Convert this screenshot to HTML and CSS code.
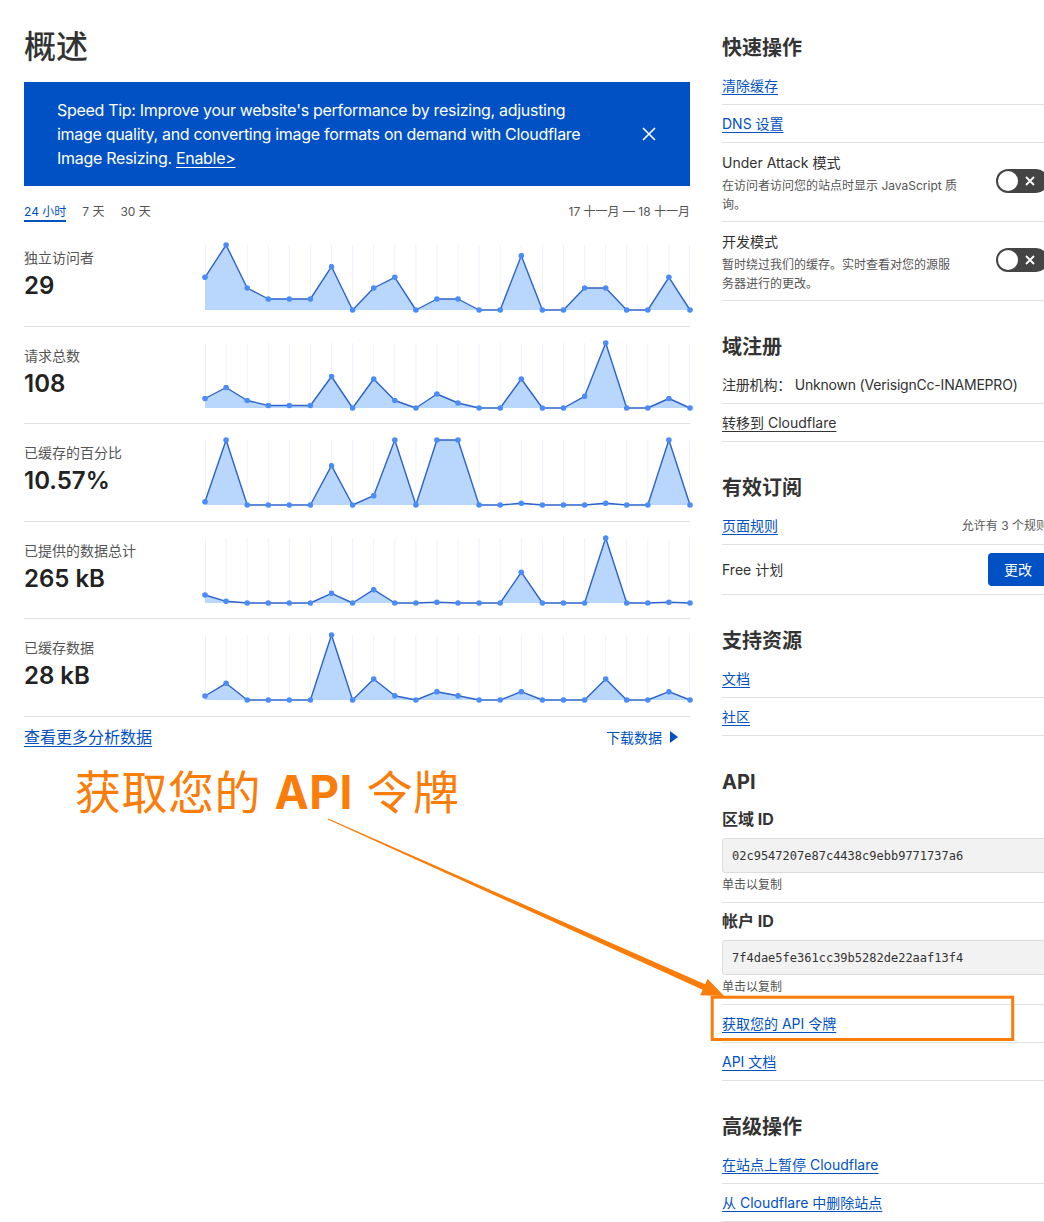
FILE: index.html
```html
<!DOCTYPE html>
<html lang="zh-CN">
<head>
<meta charset="utf-8">
<title>概述</title>
<link rel="stylesheet" href="styles.css">
</head>
<body>
<svg class="defs" width="0" height="0" aria-hidden="true">
  <defs>
    <marker id="dot" viewBox="0 0 6 6" refX="3" refY="3" markerWidth="6" markerHeight="6" markerUnits="userSpaceOnUse">
      <circle cx="3" cy="3" r="2.8" fill="#4a8df8"/>
    </marker>
  </defs>
</svg>
<div class="page">
  <main class="main">
    <h1 class="title">概述</h1>
    <div class="banner">
      <p class="banner-text">Speed Tip: Improve your website's performance by resizing, adjusting image quality, and converting image formats on demand with Cloudflare Image Resizing. <a class="banner-link" href="#">Enable&gt;</a></p>
      <svg class="close" viewBox="0 0 14 14" width="14" height="14"><path d="M1 1L13 13M13 1L1 13" stroke="#fff" stroke-width="1.6" fill="none"/></svg>
    </div>
    <div class="range">
      <div class="tabs"><span class="tab active">24 小时</span><span class="tab">7 天</span><span class="tab">30 天</span></div>
      <div class="dates">17 十一月 — 18 十一月</div>
    </div>
    <div class="metrics">
      <div class="metric">
        <div class="metric-info"><div class="metric-label">独立访问者</div><div class="metric-value">29</div></div>
        <svg class="chart" viewBox="0 0 485 65" width="485" height="65">
          <path class="grid" d="M0.5 0V65M21.1 0V65M42.2 0V65M63.3 0V65M84.3 0V65M105.4 0V65M126.5 0V65M147.6 0V65M168.7 0V65M189.8 0V65M210.9 0V65M231.9 0V65M253 0V65M274.1 0V65M295.2 0V65M316.3 0V65M337.4 0V65M358.5 0V65M379.6 0V65M400.7 0V65M421.7 0V65M442.8 0V65M463.9 0V65M484.5 0V65"/>
          <polygon class="area" points="0,32.3 21.1,0 42.2,43 63.3,54 84.3,54 105.4,54 126.5,21.7 147.6,65 168.7,43 189.8,32.3 210.9,65 231.9,54 253,54 274.1,65 295.2,65 316.3,10.7 337.4,65 358.5,65 379.6,43 400.7,43 421.7,65 442.8,65 463.9,32.3 485,65 0,65"/>
          <polyline class="line" points="0,32.3 21.1,0 42.2,43 63.3,54 84.3,54 105.4,54 126.5,21.7 147.6,65 168.7,43 189.8,32.3 210.9,65 231.9,54 253,54 274.1,65 295.2,65 316.3,10.7 337.4,65 358.5,65 379.6,43 400.7,43 421.7,65 442.8,65 463.9,32.3 485,65"/>
        </svg>
      </div>
      <div class="metric">
        <div class="metric-info"><div class="metric-label">请求总数</div><div class="metric-value">108</div></div>
        <svg class="chart" viewBox="0 0 485 65" width="485" height="65">
          <path class="grid" d="M0.5 0V65M21.1 0V65M42.2 0V65M63.3 0V65M84.3 0V65M105.4 0V65M126.5 0V65M147.6 0V65M168.7 0V65M189.8 0V65M210.9 0V65M231.9 0V65M253 0V65M274.1 0V65M295.2 0V65M316.3 0V65M337.4 0V65M358.5 0V65M379.6 0V65M400.7 0V65M421.7 0V65M442.8 0V65M463.9 0V65M484.5 0V65"/>
          <polygon class="area" points="0,55.5 21.1,44.5 42.2,57.5 63.3,62.5 84.3,62.5 105.4,62.5 126.5,33.5 147.6,65 168.7,36 189.8,57.5 210.9,65 231.9,51 253,60 274.1,65 295.2,65 316.3,36 337.4,65 358.5,65 379.6,53.3 400.7,0 421.7,65 442.8,65 463.9,55.5 485,65 0,65"/>
          <polyline class="line" points="0,55.5 21.1,44.5 42.2,57.5 63.3,62.5 84.3,62.5 105.4,62.5 126.5,33.5 147.6,65 168.7,36 189.8,57.5 210.9,65 231.9,51 253,60 274.1,65 295.2,65 316.3,36 337.4,65 358.5,65 379.6,53.3 400.7,0 421.7,65 442.8,65 463.9,55.5 485,65"/>
        </svg>
      </div>
      <div class="metric">
        <div class="metric-info"><div class="metric-label">已缓存的百分比</div><div class="metric-value">10.57%</div></div>
        <svg class="chart" viewBox="0 0 485 65" width="485" height="65">
          <path class="grid" d="M0.5 0V65M21.1 0V65M42.2 0V65M63.3 0V65M84.3 0V65M105.4 0V65M126.5 0V65M147.6 0V65M168.7 0V65M189.8 0V65M210.9 0V65M231.9 0V65M253 0V65M274.1 0V65M295.2 0V65M316.3 0V65M337.4 0V65M358.5 0V65M379.6 0V65M400.7 0V65M421.7 0V65M442.8 0V65M463.9 0V65M484.5 0V65"/>
          <polygon class="area" points="0,61.7 21.1,0 42.2,65 63.3,65 84.3,65 105.4,65 126.5,25.7 147.6,65 168.7,55.7 189.8,0 210.9,65 231.9,0 253,0 274.1,65 295.2,65 316.3,63.3 337.4,65 358.5,65 379.6,65 400.7,63.3 421.7,65 442.8,65 463.9,0 485,65 0,65"/>
          <polyline class="line" points="0,61.7 21.1,0 42.2,65 63.3,65 84.3,65 105.4,65 126.5,25.7 147.6,65 168.7,55.7 189.8,0 210.9,65 231.9,0 253,0 274.1,65 295.2,65 316.3,63.3 337.4,65 358.5,65 379.6,65 400.7,63.3 421.7,65 442.8,65 463.9,0 485,65"/>
        </svg>
      </div>
      <div class="metric">
        <div class="metric-info"><div class="metric-label">已提供的数据总计</div><div class="metric-value">265 kB</div></div>
        <svg class="chart" viewBox="0 0 485 65" width="485" height="65">
          <path class="grid" d="M0.5 0V65M21.1 0V65M42.2 0V65M63.3 0V65M84.3 0V65M105.4 0V65M126.5 0V65M147.6 0V65M168.7 0V65M189.8 0V65M210.9 0V65M231.9 0V65M253 0V65M274.1 0V65M295.2 0V65M316.3 0V65M337.4 0V65M358.5 0V65M379.6 0V65M400.7 0V65M421.7 0V65M442.8 0V65M463.9 0V65M484.5 0V65"/>
          <polygon class="area" points="0,57 21.1,63.3 42.2,65 63.3,65 84.3,65 105.4,65 126.5,55.3 147.6,65 168.7,51.7 189.8,65 210.9,65 231.9,64.3 253,65 274.1,65 295.2,65 316.3,34.2 337.4,65 358.5,65 379.6,65 400.7,0 421.7,65 442.8,65 463.9,64.3 485,65 0,65"/>
          <polyline class="line" points="0,57 21.1,63.3 42.2,65 63.3,65 84.3,65 105.4,65 126.5,55.3 147.6,65 168.7,51.7 189.8,65 210.9,65 231.9,64.3 253,65 274.1,65 295.2,65 316.3,34.2 337.4,65 358.5,65 379.6,65 400.7,0 421.7,65 442.8,65 463.9,64.3 485,65"/>
        </svg>
      </div>
      <div class="metric">
        <div class="metric-info"><div class="metric-label">已缓存数据</div><div class="metric-value">28 kB</div></div>
        <svg class="chart" viewBox="0 0 485 65" width="485" height="65">
          <path class="grid" d="M0.5 0V65M21.1 0V65M42.2 0V65M63.3 0V65M84.3 0V65M105.4 0V65M126.5 0V65M147.6 0V65M168.7 0V65M189.8 0V65M210.9 0V65M231.9 0V65M253 0V65M274.1 0V65M295.2 0V65M316.3 0V65M337.4 0V65M358.5 0V65M379.6 0V65M400.7 0V65M421.7 0V65M442.8 0V65M463.9 0V65M484.5 0V65"/>
          <polygon class="area" points="0,61 21.1,48.3 42.2,65 63.3,65 84.3,65 105.4,65 126.5,0 147.6,65 168.7,44 189.8,60.7 210.9,65 231.9,56.7 253,60.7 274.1,65 295.2,65 316.3,56.7 337.4,65 358.5,65 379.6,65 400.7,44 421.7,65 442.8,65 463.9,56.7 485,65 0,65"/>
          <polyline class="line" points="0,61 21.1,48.3 42.2,65 63.3,65 84.3,65 105.4,65 126.5,0 147.6,65 168.7,44 189.8,60.7 210.9,65 231.9,56.7 253,60.7 274.1,65 295.2,65 316.3,56.7 337.4,65 358.5,65 379.6,65 400.7,44 421.7,65 442.8,65 463.9,56.7 485,65"/>
        </svg>
      </div>
    </div>
    <div class="foot">
      <a class="more" href="#">查看更多分析数据</a>
      <a class="download" href="#">下载数据 <svg class="tri" viewBox="0 0 8 12" width="8" height="12"><polygon points="0,0 8,6 0,12" fill="#0051c3"/></svg></a>
    </div>
    <div class="callout">获取您的 <b>API</b> 令牌</div>
  </main>

  <aside class="side">
    <section class="card">
      <h2 class="card-title">快速操作</h2>
      <div class="row"><a class="link" href="#">清除缓存</a></div>
      <div class="row"><a class="link" href="#">DNS 设置</a></div>
      <div class="row toggle-row">
        <div class="toggle-text">
          <div class="toggle-name">Under Attack 模式</div>
          <div class="toggle-desc">在访问者访问您的站点时显示 JavaScript 质询。</div>
        </div>
        <span class="switch"><span class="knob"></span><svg class="switch-x" viewBox="0 0 10 10" width="10" height="10"><path d="M1 1L9 9M9 1L1 9" stroke="#fff" stroke-width="1.8" fill="none"/></svg></span>
      </div>
      <div class="row toggle-row">
        <div class="toggle-text">
          <div class="toggle-name">开发模式</div>
          <div class="toggle-desc">暂时绕过我们的缓存。实时查看对您的源服务器进行的更改。</div>
        </div>
        <span class="switch"><span class="knob"></span><svg class="switch-x" viewBox="0 0 10 10" width="10" height="10"><path d="M1 1L9 9M9 1L1 9" stroke="#fff" stroke-width="1.8" fill="none"/></svg></span>
      </div>
    </section>

    <section class="card">
      <h2 class="card-title">域注册</h2>
      <div class="row"><span class="reg">注册机构：&nbsp;Unknown (VerisignCc-INAMEPRO)</span></div>
      <div class="row"><a class="link link-dark" href="#">转移到 Cloudflare</a></div>
    </section>

    <section class="card">
      <h2 class="card-title">有效订阅</h2>
      <div class="row"><a class="link" href="#">页面规则</a><span class="note">允许有 3 个规则</span></div>
      <div class="row plan-row"><span>Free 计划</span><span class="btn">更改</span></div>
    </section>

    <section class="card">
      <h2 class="card-title">支持资源</h2>
      <div class="row"><a class="link" href="#">文档</a></div>
      <div class="row"><a class="link" href="#">社区</a></div>
    </section>

    <section class="card">
      <h2 class="card-title">API</h2>
      <div class="id-block">
        <h3 class="id-title">区域 ID</h3>
        <div class="idbox">02c9547207e87c4438c9ebb9771737a6</div>
        <div class="hint">单击以复制</div>
      </div>
      <div class="id-block">
        <h3 class="id-title">帐户 ID</h3>
        <div class="idbox">7f4dae5fe361cc39b5282de22aaf13f4</div>
        <div class="hint">单击以复制</div>
      </div>
      <div class="row"><a class="link" href="#">获取您的 API 令牌</a></div>
      <div class="row"><a class="link" href="#">API 文档</a></div>
    </section>

    <section class="card">
      <h2 class="card-title">高级操作</h2>
      <div class="row"><a class="link" href="#">在站点上暂停 Cloudflare</a></div>
      <div class="row"><a class="link" href="#">从 Cloudflare 中删除站点</a></div>
    </section>
  </aside>
</div>

<svg class="annot" width="1044" height="1222" viewBox="0 0 1044 1222" aria-hidden="true">
  <polygon points="328.2,818.5 705.1,984.3 707.6,978.8 724,996 700.2,995.2 702.7,989.7 327.8,819.5" fill="#fa7d09"/>
  <rect x="712.2" y="997.2" width="300.5" height="42.3" fill="none" stroke="#fa7d09" stroke-width="3"/>
</svg>
</body>
</html>
```

FILE: styles.css
```css
* { box-sizing: border-box; }
html { overflow: hidden; }
body {
  margin: 0;
  position: relative;
  background: #fff;
  color: #313131;
  font-family: Inter, "Noto Sans CJK SC", sans-serif;
}
.defs { position: absolute; width: 0; height: 0; }

.page {
  display: flex;
  gap: 32px;
  width: 1100px;
  padding: 26px 0 0 24px;
}
.main { width: 666px; flex: none; }
.side { width: 326px; flex: none; }

.title {
  margin: 0 0 14px;
  font-size: 32px;
  line-height: 42px;
  font-weight: 500;
  color: #333;
}

.banner {
  display: flex;
  align-items: center;
  justify-content: space-between;
  height: 104px;
  padding: 16px 34px 16px 33px;
  background: #0051c3;
  color: #fff;
}
.banner-text {
  margin: 0;
  max-width: 540px;
  font-size: 16px;
  line-height: 24px;
  letter-spacing: -0.3px;
}
.banner-link {
  color: #fff;
  text-decoration: underline;
  text-underline-offset: 3px;
}
.close { flex: none; display: block; }

.range {
  display: flex;
  justify-content: space-between;
  align-items: flex-start;
  margin-top: 17px;
  font-size: 12px;
  line-height: 17px;
  color: #555;
}
.tabs { display: flex; gap: 16px; }
.tab { border-bottom: 2px solid transparent; }
.tab.active { color: #0051c3; border-bottom-color: #0051c3; }

.metrics { margin-top: 7px; }
.metric {
  display: flex;
  padding: 16px 0 15.5px;
  border-bottom: 1px solid #e1e1e1;
}
.metric-info { width: 181px; flex: none; padding-top: 4px; }
.metric-label { font-size: 14px; line-height: 18px; color: #555; }
.metric-value {
  margin-top: 4px;
  font-size: 24px;
  line-height: 30px;
  font-weight: 600;
  color: #222;
}
.chart { display: block; overflow: visible; width: 485px; height: 65px; }
.grid { stroke: #edf3fd; stroke-width: 1; fill: none; }
.area { fill: #b9d6fc; }
.line {
  fill: none;
  stroke: #2c63c9;
  stroke-width: 1.4;
  stroke-linejoin: round;
  marker-start: url(#dot);
  marker-mid: url(#dot);
  marker-end: url(#dot);
}

.foot {
  display: flex;
  justify-content: space-between;
  align-items: center;
  padding-top: 9px;
}
.more {
  font-size: 16px;
  line-height: 22px;
  color: #0051c3;
  text-decoration: underline;
  text-underline-offset: 3px;
}
.download {
  display: flex;
  align-items: center;
  gap: 8px;
  padding-right: 12px;
  font-size: 14px;
  color: #0051c3;
  text-decoration: none;
}
.tri { display: block; }

.callout {
  margin: 19px 0 0 51px;
  font-size: 46px;
  line-height: 50px;
  color: #fa7d09;
  letter-spacing: 0.5px;
}
.callout b { font-weight: 700; }

.annot { position: absolute; left: 0; top: 0; pointer-events: none; }

/* sidebar */
.card { margin-top: 32px; }
.card:first-child { margin-top: 8px; }
.card-title {
  margin: 0 0 5px;
  font-size: 20px;
  line-height: 28px;
  font-weight: 700;
  color: #333;
}
.row {
  display: flex;
  align-items: center;
  justify-content: space-between;
  padding: 9px 0 8px;
  font-size: 14px;
  line-height: 20px;
  border-bottom: 1px solid #e1e1e1;
}
.reg { letter-spacing: -0.2px; }
.link {
  color: #0051c3;
  text-decoration: underline;
  text-underline-offset: 3px;
}
.link-dark { color: #333; }
.note { font-size: 12px; color: #595959; white-space: nowrap; }

.toggle-row { padding: 10px 0 7px; }
.toggle-desc {
  width: 236px;
  margin-top: 3px;
  font-size: 12px;
  line-height: 19px;
  color: #555;
}
.switch {
  position: relative;
  display: flex;
  align-items: center;
  justify-content: flex-end;
  flex: none;
  width: 52px;
  height: 24px;
  margin-bottom: 5px;
  padding-right: 13px;
  border-radius: 12px;
  background: #444;
}
.knob {
  position: absolute;
  left: 2px;
  top: 2px;
  width: 20px;
  height: 20px;
  border-radius: 50%;
  background: #fff;
}
.switch-x { display: block; }

.plan-row { padding: 8px 0; }
.btn {
  display: flex;
  align-items: center;
  height: 33px;
  padding: 0 16px;
  border-radius: 4px;
  background: #0051c3;
  color: #fff;
  font-size: 14px;
}

.id-block { padding: 7px 0 8px; border-bottom: 1px solid #e1e1e1; }
.id-title {
  margin: 0;
  font-size: 16px;
  line-height: 22px;
  font-weight: 700;
  color: #333;
}
.idbox {
  display: flex;
  align-items: center;
  height: 35px;
  margin-top: 8px;
  padding-left: 9px;
  background: #f2f2f2;
  border: 1px solid #dcdcdc;
  border-radius: 3px;
  font-family: "DejaVu Sans Mono", monospace;
  font-size: 12px;
  color: #333;
}
.hint { margin-top: 3px; font-size: 12px; line-height: 18px; color: #555; }
```
